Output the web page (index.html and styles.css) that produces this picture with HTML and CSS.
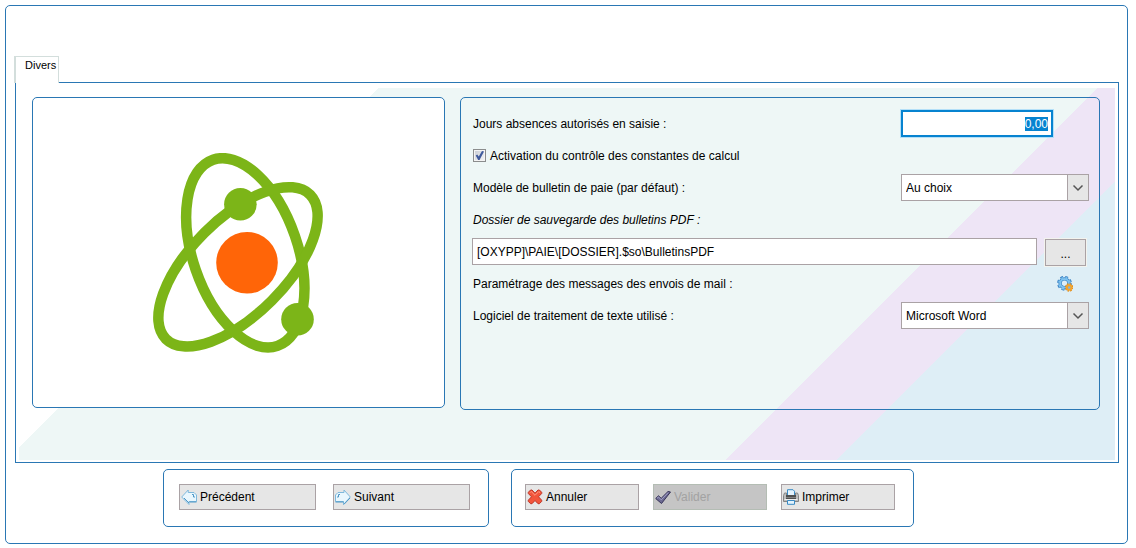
FILE: index.html
```html
<!DOCTYPE html>
<html lang="fr">
<head>
<meta charset="utf-8">
<title>Divers</title>
<link rel="stylesheet" href="styles.css">
</head>
<body>
<main class="frame">
  <div class="tabs" role="tablist">
    <button class="tab" type="button" role="tab" aria-selected="true">Divers</button>
  </div>
  <section class="tab-panel" role="tabpanel">
    <div class="backdrop">
      <div class="card picture">
        <svg class="atom" viewBox="13 13 170 200" aria-hidden="true">
          <g fill="none" stroke="#7cb518" stroke-width="10.5">
            <ellipse cx="105.3" cy="112.8" rx="52.4" ry="98.5" transform="rotate(-19.1 105.3 112.8)"/>
            <ellipse cx="98" cy="126.8" rx="47.8" ry="102" transform="rotate(45 98 126.8)"/>
          </g>
          <circle cx="100.4" cy="64.3" r="16.3" fill="#7cb518"/>
          <circle cx="157.5" cy="179.3" r="16.3" fill="#7cb518"/>
          <circle cx="107" cy="122.7" r="30.8" fill="#ff6508"/>
        </svg>
      </div>
      <form class="card form">
        <div class="row">
          <label for="jours">Jours absences autorisés en saisie :</label>
          <div class="control"><input class="field number" id="jours" type="text" value="0,00"></div>
        </div>
        <div class="row">
          <label class="check"><input class="box" type="checkbox" checked>Activation du contrôle des constantes de calcul</label>
        </div>
        <div class="row">
          <label for="modele">Modèle de bulletin de paie (par défaut) :</label>
          <div class="control combo">
            <select class="select" id="modele"><option>Au choix</option></select>
            <svg class="arrow" viewBox="0 0 20 25" aria-hidden="true"><path d="M5.500 10.500l4.500 4.500 4.500-4.500" fill="none" stroke="#555" stroke-width="1.500"/></svg>
          </div>
        </div>
        <div class="row">
          <label class="italic" for="dossier">Dossier de sauvegarde des bulletins PDF :</label>
        </div>
        <div class="row path">
          <input class="field" id="dossier" type="text" value="[OXYPP]\PAIE\[DOSSIER].$so\BulletinsPDF">
          <button class="browse" type="button">...</button>
        </div>
        <div class="row">
          <span>Paramétrage des messages des envois de mail :</span>
          <button class="gear" type="button" aria-label="Paramétrer">
            <svg class="icon" viewBox="0 0 16 16">
              <circle cx="7.500" cy="7.300" r="6.300" fill="none" stroke="#3a83c4" stroke-width="2.200" stroke-dasharray="2.800 2.148"/>
              <circle cx="7.500" cy="7.300" r="4.400" fill="none" stroke="#3a83c4" stroke-width="3.400"/>
              <circle cx="7.500" cy="7.300" r="5.600" fill="none" stroke="#7fc3f0" stroke-width="1.600" stroke-dasharray="2 2.398" stroke-dashoffset="-.4"/>
              <circle cx="7.500" cy="7.300" r="4.300" fill="none" stroke="#7fc3f0" stroke-width="2"/>
              <circle cx="12.200" cy="11.500" r="3.500" fill="none" stroke="#e08a14" stroke-width="1.600" stroke-dasharray="1.600 1.149"/>
              <circle cx="12.200" cy="11.500" r="2.300" fill="#7fb4e0" stroke="#f5a42a" stroke-width="2"/>
            </svg>
          </button>
        </div>
        <div class="row">
          <label for="logiciel">Logiciel de traitement de texte utilisé :</label>
          <div class="control combo">
            <select class="select" id="logiciel"><option>Microsoft Word</option></select>
            <svg class="arrow" viewBox="0 0 20 25" aria-hidden="true"><path d="M5.500 10.500l4.500 4.500 4.500-4.500" fill="none" stroke="#555" stroke-width="1.500"/></svg>
          </div>
        </div>
      </form>
    </div>
  </section>
  <footer class="actions">
    <div class="card group nav">
      <button class="action wide" type="button">
        <svg class="icon" viewBox="0 0 16 16"><path d="M.7 8L7.200 1V3.500H13L15.500 6V12.500H8V15.500L.7 8Z" fill="#e9f7fe" stroke="#7fb9dc"/><path d="M11 5.500h1.500v2.500h1.500M3 9l5 5M8.500 13h7" fill="none" stroke="#4f97c6"/></svg>
        Précédent
      </button>
      <button class="action wide" type="button">
        <svg class="icon" viewBox="0 0 16 16"><path d="M15.300 8L9 1V3.500H3L.5 6V12.500H8.500V15.500L15.300 8Z" fill="#e9f7fe" stroke="#7fb9dc"/><path d="M5 5.500H3.500v2.500H2M.5 13h8M9 15.300l6-6.300" fill="none" stroke="#4f97c6"/></svg>
        Suivant
      </button>
    </div>
    <div class="card group decide">
      <button class="action" type="button">
        <svg class="icon" viewBox="0 0 16 16"><path d="M1.300 3.300L3.600 1 5 1 8 4.200 11 1h1.400L14.700 3.300V4.500L11.500 7.800l3.200 3.400v1.200l-2.300 2.300H11L8 11.500 5 14.700H3.600L1.300 12.400V11.200L4.500 7.800 1.300 4.500Z" fill="#f2553c" stroke="#bd3527"/><path d="M3 3.700l1.200-1.200L8 6.300l3.800-3.800L13 3.700" fill="none" stroke="#ff9c86"/></svg>
        Annuler
      </button>
      <button class="action" type="button" disabled>
        <svg class="icon" viewBox="0 0 16 16"><path d="M.7 9.500L3.500 6.800 6.200 9.300 13 2.500 15.500 3 6.500 14.500Z" fill="#6d6b93" stroke="#363358" stroke-linejoin="round"/><path d="M2 9.300l1.500-1.300 2.700 2.800 7-7.300" fill="none" stroke="#a9a7cc" stroke-width=".9"/></svg>
        Valider
      </button>
      <button class="action" type="button">
        <svg class="icon" viewBox="0 0 16 16"><path d="M1.500 4h2v2h9V4h2l1 2.500V12.500H.5V6.500Z" fill="#bdbdbd" stroke="#858585"/><path d="M4.500 6V.7h5.500l1.500 1.500V6" fill="#e4f3fd" stroke="#3a8ac4"/><path d="M3 6h10v4H3z" fill="#505050"/><path d="M3 8h10v1H3z" fill="#808080"/><path d="M1.500 10.500h13" stroke="#eee"/><path d="M4.500 11.500h7v3.800h-7z" fill="#e4f3fd" stroke="#3a8ac4"/></svg>
        Imprimer
      </button>
    </div>
  </footer>
</main>
<script src="script.js"></script>
</body>
</html>
```
FILE: styles.css
```css
* {
  box-sizing: border-box;
}

body {
  margin: 0;
  padding: 5px 8px 4px 5px;
  min-height: 100vh;
  display: flex;
  background: #fff;
  color: #000;
  font: 12px/16px "Liberation Sans", Arial, sans-serif;
}

button,
input,
select {
  font: inherit;
  color: inherit;
  margin: 0;
  border-radius: 0;
}

.frame {
  flex: 1;
  display: flex;
  flex-direction: column;
  padding: 50px 8px 16px 9px;
  border: 1px solid #2a77b4;
  border-radius: 5px;
}

.tabs {
  display: flex;
  margin-left: -1px;
}

.tab {
  z-index: 1;
  height: 27px;
  padding: 0 2px 10px 9px;
  background: #fff;
  border: 1px solid #d3dedc;
  border-left-width: 2px;
  border-bottom: 0;
  font-size: 11px;
}

.tab-panel {
  flex: 1;
  display: flex;
  margin-top: -1px;
  padding: 5px 3px 2px;
  border: 1px solid #2a77b4;
}

.backdrop {
  flex: 1;
  display: grid;
  grid-template-columns: 413fr 640fr;
  gap: 15px;
  padding: 9px 15px 50px 13px;
  background: linear-gradient(135deg, #fff 24.5%, #eef7f6 24.5% 73.5%, #eee5f6 73.5% 81%, #deeef6 81%);
}

.card {
  border: 1px solid #2a77b4;
  border-radius: 5px;
}

.picture {
  display: flex;
  align-items: center;
  justify-content: center;
  margin-bottom: 2px;
  padding-right: 2px;
  background: #fff;
}

.atom {
  width: 170px;
  height: 200px;
}

.form {
  padding: 10px 10px 77px 12px;
}

.row {
  display: flex;
  align-items: center;
  justify-content: space-between;
  height: 32px;
}

.italic {
  font-style: italic;
}

.control {
  width: 188px;
}

.field,
.select {
  display: block;
  height: 27px;
  margin-bottom: 1px;
  padding: 0 4px;
  border: 1px solid #aaa2a5;
  background: #fff;
  outline: 0;
}

.number {
  width: 152px;
  padding: 0 3px;
  border: 2px solid #0683d0;
  box-shadow: 0 0 0 1px #b4e0f8;
  text-align: right;
}

.number::selection {
  background: #0683d0;
  color: #fff;
}

.check {
  display: flex;
  align-items: center;
  gap: 4px;
}

.box {
  appearance: none;
  display: grid;
  place-items: center;
  width: 13px;
  height: 13px;
  margin-bottom: 1px;
  border: 1px solid #8b8d8d;
  background: linear-gradient(135deg, #c6cbd3, #f6f6f6);
  box-shadow: inset 0 0 0 1px #f4f4f4;
}

.box:checked::before {
  content: "";
  width: 9px;
  height: 9px;
  background: #3f5a9c;
  clip-path: polygon(8% 50%, 25% 38%, 42% 62%, 78% 0, 100% 6%, 50% 100%, 35% 100%);
}

.combo {
  display: grid;
}

.combo > * {
  grid-area: 1 / 1;
}

.select {
  appearance: none;
  width: 100%;
}

.arrow {
  justify-self: end;
  align-self: start;
  width: 21px;
  height: 25px;
  margin: 1px 1px 0 0;
  border-left: 1px solid #aaa2a5;
  background: #e6e6e6;
  pointer-events: none;
}

.path {
  gap: 8px;
  margin: 0 3px 0 -1px;
}

.path .field {
  flex: 1;
}

.browse {
  width: 41px;
  height: 27px;
  padding: 3px 0 0;
  border: 1px solid #aaa2a5;
  background: #e6e6e6;
  box-shadow: 0 0 0 1px #f3f3ee;
}

.gear {
  display: flex;
  margin-right: 16px;
  padding: 0;
  border: 0;
  background: none;
}

.icon {
  flex: none;
  width: 16px;
  height: 16px;
}

.actions {
  display: flex;
  gap: 22px;
  padding: 6px 0 0 148px;
}

.group {
  display: flex;
  padding: 14px 18px 16px 15px;
  gap: 17px;
}

.decide {
  padding-left: 13px;
  gap: 14px;
}

.action {
  display: flex;
  align-items: center;
  gap: 3px;
  width: 114px;
  height: 26px;
  padding: 0 1px;
  border: 1px solid #aaa2a5;
  background: #e6e6e6;
}

.wide {
  width: 137px;
}

.action:disabled {
  border-color: #b4bdb4;
  background: #c5c5c5;
  color: #a2a2a2;
}
```
FILE: script.js
```js
const days = document.getElementById("jours");
days.focus();
days.select();
```
